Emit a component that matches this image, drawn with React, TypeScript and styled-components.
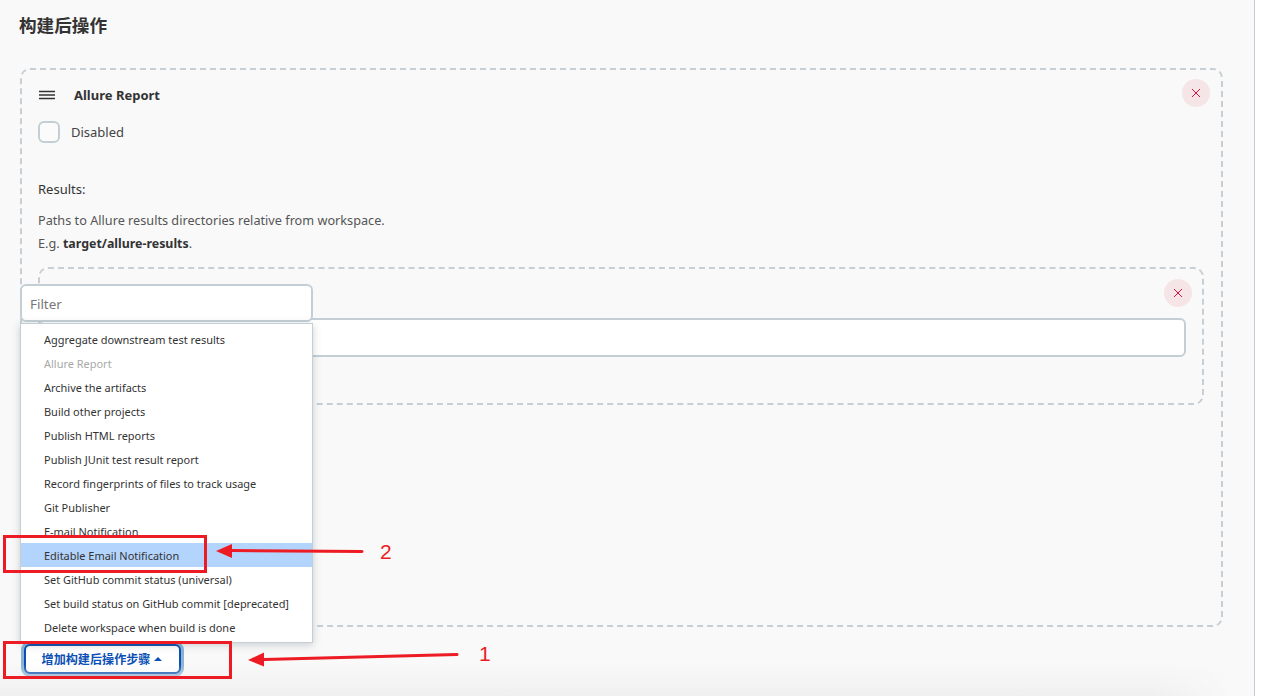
import React from "react";
import styled, { createGlobalStyle } from "styled-components";

const Global = createGlobalStyle`
  html, body { margin: 0; padding: 0; background: #fff; }
  body { font-family: "Noto Sans", "Noto Sans CJK SC", sans-serif; color: #333; }
`;
const Viewport = styled.div`
  position: relative; width: 1283px; height: 698px; overflow: hidden; background: #fff;
`;
const Panel = styled.main`
  box-sizing: border-box; position: relative; width: 1255px; height: 696px; background: #f9f9f9;
  border-right: 1px solid #c3ccd3; padding: 13px 32px 0 19px;
`;
const Title = styled.h2`
  margin: 0 0 31px; font: 700 17.6px/24px "Noto Sans CJK SC", sans-serif; color: #333;
`;
const Card = styled.section`
  box-sizing: border-box; position: relative; height: 559px; margin-left: 1px; width: 1203px;
  border: 2px dashed #c5cfd5; border-radius: 10px; padding: 15px 16px 0;
`;
const Head = styled.div`
  display: flex; align-items: center; gap: 19px; height: 20px; padding-left: 1px;
`;
const HeadTitle = styled.strong`
  font-size: 13px; line-height: 20px; font-weight: 700; color: #333;
`;
const CheckRow = styled.label`
  display: flex; align-items: center; gap: 11px; margin-top: 16px; font-size: 13px; height: 22px; color: #444;
`;
const Check = styled.span`
  box-sizing: border-box; width: 22px; height: 22px; border: 2px solid #c3cfd5; border-radius: 6px; background: #fbfbfb;
`;
const Label = styled.div`
  margin-top: 36px; font-size: 13px; line-height: 20px; color: #333;
`;
const Help = styled.p`
  margin: 10px 0 0; font-size: 12.7px; line-height: 23px; color: #555;
  strong { color: #333; font-weight: 700; font-size: 12.4px; }
`;
const Inner = styled.div`
  box-sizing: border-box; position: relative; width: 1166px; height: 138px; margin-top: 12px;
  border: 2px dashed #c5cfd5; border-radius: 10px; padding: 49px 16px 0 0;
`;
const TextBox = styled.div`
  box-sizing: border-box; height: 39px; background: #fff; border: 2px solid #c3cfd5; border-radius: 6px;
`;
const Close = styled.button<{ $top: number; $right: number }>`
  position: absolute; top: ${p => p.$top}px; right: ${p => p.$right}px; width: 28px; height: 28px; padding: 0;
  display: flex; align-items: center; justify-content: center; border: 0; border-radius: 50%; background: #f6e5e7;
`;
const Popup = styled.div`
  position: absolute; left: 20px; top: 284px; width: 293px; display: flex; flex-direction: column; gap: 1px;
`;
const Filter = styled.div`
  box-sizing: border-box; height: 38px; padding: 2px 8px 0; display: flex; align-items: center;
  font-size: 13.4px; color: #777; background: #fff; border: 2px solid #c3cfd5; border-radius: 6px;
`;
const Menu = styled.ul`
  box-sizing: border-box; height: 320px; margin: 0; padding: 3px 0 0; list-style: none; background: #fff;
  border: 1px solid #c3cfd5; box-shadow: 0 2px 8px rgba(80, 90, 100, .28);
`;
const Item = styled.li<{ $active?: boolean; $disabled?: boolean }>`
  height: 24px; padding-left: 23px; font-size: 10.96px; line-height: 25px; white-space: nowrap;
  color: ${p => (p.$disabled ? "#a8a8a8" : "#333")};
  background: ${p => (p.$active ? "#b3d4fc" : "transparent")};
`;
const AddButton = styled.button`
  box-sizing: border-box; width: 157px; height: 30px; margin: 17px 0 0 5px; padding: 0 1px 0 0;
  display: flex; align-items: center; justify-content: center; gap: 4px;
  font: 700 12.1px/1 "Noto Sans CJK SC", sans-serif; color: #0b50b5; background: #fff;
  border: 2px solid #0b4fb0; border-radius: 6px; box-shadow: 0 0 0 3px #8ab4d6;
`;
const Caret = styled.span`
  width: 0; height: 0; border-left: 4.5px solid transparent; border-right: 4.5px solid transparent;
  border-bottom: 4.5px solid #0b50b5;
`;
const BottomFade = styled.div`
  position: absolute; left: 0; bottom: 0; right: 0; height: 32px; pointer-events: none;
  background: linear-gradient(to bottom, rgba(238,238,238,0), #efefef);
  -webkit-mask-image: linear-gradient(to right, #000 92%, transparent 98%);
`;
const Marker = styled.div<{ $x: number; $y: number; $w: number; $h: number }>`
  position: absolute; left: ${p => p.$x}px; top: ${p => p.$y}px; width: ${p => p.$w}px; height: ${p => p.$h}px;
  box-sizing: border-box; border: 3px solid #ed1c24;
`;
const Overlay = styled.svg`
  position: absolute; left: 0; top: 0; pointer-events: none;
`;
const Num = styled.span<{ $x: number; $y: number }>`
  position: absolute; left: ${p => p.$x}px; top: ${p => p.$y}px;
  font: 400 21px/24px "Liberation Sans", sans-serif; color: #ed1c24;
`;

const XIcon = () => (
  <svg width="10" height="10" viewBox="0 0 10 10"><path d="M1 1l8 8M9 1l-8 8" stroke="#e0123f" strokeWidth="1" fill="none" /></svg>
);
const Burger = () => (
  <svg width="16" height="20" viewBox="0 0 16 20"><path d="M0 6.5h16M0 10h16M0 13.5h16" stroke="#333" strokeWidth="1.4" fill="none" /></svg>
);

const items = [
  "Aggregate downstream test results", "Allure Report", "Archive the artifacts", "Build other projects",
  "Publish HTML reports", "Publish JUnit test result report", "Record fingerprints of files to track usage",
  "Git Publisher", "E-mail Notification", "Editable Email Notification", "Set GitHub commit status (universal)",
  "Set build status on GitHub commit [deprecated]", "Delete workspace when build is done",
];

export default function App() {
  return (
    <Viewport>
      <Global />
      <Panel>
        <Title>构建后操作</Title>
        <Card>
          <Close $top={9} $right={11}><XIcon /></Close>
          <Head><Burger /><HeadTitle>Allure Report</HeadTitle></Head>
          <CheckRow><Check />Disabled</CheckRow>
          <Label>Results:</Label>
          <Help>Paths to Allure results directories relative from workspace.<br />E.g. <strong>target/allure-results</strong>.</Help>
          <Inner>
            <Close $top={10} $right={10}><XIcon /></Close>
            <TextBox />
          </Inner>
        </Card>
        <AddButton>增加构建后操作步骤 <Caret /></AddButton>
        <BottomFade />
      </Panel>
      <Popup>
        <Filter>Filter</Filter>
        <Menu>
          {items.map(t => (
            <Item key={t} $active={t.startsWith("Editable")} $disabled={t === "Allure Report"}>{t}</Item>
          ))}
        </Menu>
      </Popup>
      <Marker $x={3} $y={535} $w={204} $h={38} />
      <Marker $x={3} $y={641} $w={229} $h={38} />
      <Overlay width="1283" height="698" viewBox="0 0 1283 698">
        <path d="M362 551.5L232 550.5" stroke="#ed1c24" strokeWidth="3" strokeLinecap="round" />
        <path d="M216 551l16-7v14z" fill="#ed1c24" />
        <path d="M457 654.5L264 659.5" stroke="#ed1c24" strokeWidth="3" strokeLinecap="round" />
        <path d="M248 660l16-7.5v14z" fill="#ed1c24" />
      </Overlay>
      <Num $x={380} $y={540}>2</Num>
      <Num $x={479} $y={642}>1</Num>
    </Viewport>
  );
}
